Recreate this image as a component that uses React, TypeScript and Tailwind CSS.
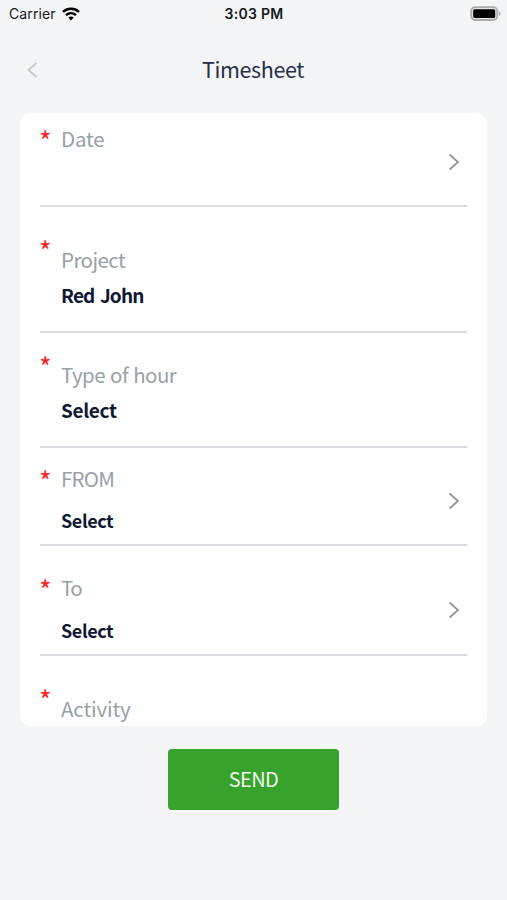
import clsx from 'clsx'

type Field = {
  label: string
  value?: string
  arrow?: string
  row: string
  star: string
  text: string
  labelStyle: string
  valueStyle?: string
}

const fields: Field[] = [
  { label: 'Date', arrow: 'mt-[40px]', row: 'h-[94px]', star: 'pt-[16px]', text: 'pt-[13px]', labelStyle: 'tracking-[-0.2px]' },
  { label: 'Project', value: 'Red John', row: 'h-[126px]', star: 'pt-[32px]', text: 'pt-[40px]', labelStyle: 'tracking-[-0.55px]', valueStyle: 'mt-[12px] text-[19px] tracking-[-0.85px] [word-spacing:2px]' },
  { label: 'Type of hour', value: 'Select', row: 'h-[115px]', star: 'pt-[22px]', text: 'pt-[29px]', labelStyle: 'tracking-[-0.55px] [word-spacing:1px]', valueStyle: 'mt-[12px] text-[19px] tracking-[-0.35px]' },
  { label: 'FROM', value: 'Select', arrow: 'mt-[44px]', row: 'h-[98px]', star: 'pt-[21px]', text: 'pt-[18px]', labelStyle: 'tracking-[-0.75px]', valueStyle: 'mt-[18px] text-[18px] tracking-[-0.4px]' },
  { label: 'To', value: 'Select', arrow: 'mt-[55px]', row: 'h-[110px]', star: 'pt-[32px]', text: 'pt-[29px]', labelStyle: 'tracking-[-1.5px]', valueStyle: 'mt-[19px] text-[18px] tracking-[-0.4px]' },
  { label: 'Activity', row: 'h-[70px]', star: 'pt-[32px]', text: 'pt-[40px]', labelStyle: 'tracking-[-0.15px]' }
]

function StatusBar () {
  return (
    <div className="grid h-7 grid-cols-3 items-center pl-[9px] pr-[6px] font-['Inter',sans-serif] text-[14px] text-[#16181b]">
      <div className="-mt-px flex items-center gap-[6px]">
        <span className="tracking-[0.1px]">Carrier</span>
        <svg width="18" height="14" viewBox="0 0 18 14" fill="none" stroke="#000" strokeWidth="2.5">
          <path d="M1 4.8C5.500 .7 12.500 .7 17 4.800"/>
          <path d="M4 8.100C6.900 5.500 11.100 5.500 14 8.100"/>
          <path d="M9 13.400 6.300 10.600C7.800 9.200 10.200 9.200 11.700 10.600Z" fill="#000" stroke="none"/>
        </svg>
      </div>
      <span className="-ml-[2px] -mt-px text-center font-semibold tracking-[0.3px]">3:03 PM</span>
      <svg className="justify-self-end" width="31" height="16" viewBox="0 0 31 16">
        <rect x="1.200" y="1.200" width="26" height="12.800" rx="4" fill="#e2e4e6" stroke="#aaacae" strokeWidth="1.800"/>
        <rect x="3.200" y="3.200" width="22" height="8.800" rx="1.500" fill="#000"/>
        <path d="M28.800 5.200C31.200 6 31.200 9.200 28.800 10Z" fill="#aaacae"/>
      </svg>
    </div>
  )
}

function FieldRow ({ field, last }: { field: Field, last: boolean }) {
  return (
    <div className={clsx('flex', field.row, !last && 'border-b-2 border-[#d9dcde]')}>
      <span className={clsx('-ml-px mr-px w-[21px] text-[27px] leading-6 text-[#fb2323]', field.star)}>*</span>
      <div className={clsx('flex-1 leading-6', field.text)}>
        <p className={clsx('text-[20.5px] text-[#98a1a5]', field.labelStyle)}>{field.label}</p>
        {field.value && <p className={clsx('font-bold text-[#0e1833]', field.valueStyle)}>{field.value}</p>}
      </div>
      {field.arrow && (
        <svg className={clsx('mr-[7px]', field.arrow)} width="12" height="18" viewBox="0 0 12 18" fill="none" stroke="#929698" strokeWidth="1.800">
          <path d="M1.500 1.500 10 9 1.500 16.500"/>
        </svg>
      )}
    </div>
  )
}

export default function App () {
  return (
    <div className="h-[900px] w-full overflow-hidden bg-[#f3f5f7] font-['Noto_Sans_CJK_SC',sans-serif]">
      <StatusBar/>

      <header className="grid h-[85px] grid-cols-[60px_1fr_60px] items-center">
        <button className="-mt-px pl-[27px]">
          <svg width="11" height="16" viewBox="0 0 11 16" fill="none" stroke="#c6c9cb" strokeWidth="1.800">
            <path d="M9.500 1 1.500 8 9.500 15"/>
          </svg>
        </button>
        <h1 className="-ml-px -mt-[3px] text-center text-[21.5px] leading-8 tracking-[-0.4px] text-[#253148]">Timesheet</h1>
      </header>

      <main className="mx-5 h-[613px] overflow-hidden rounded-[11px] bg-white px-5">
        {fields.map((field, i) => <FieldRow key={field.label} field={field} last={i === fields.length - 1}/>)}
      </main>

      <button className="mx-auto mt-[23px] block h-[61px] w-[171px] rounded-[4px] bg-[#37a22c] pb-[2px] text-[20px] tracking-[-0.6px] text-[#f2fbf1]">SEND</button>
    </div>
  )
}
